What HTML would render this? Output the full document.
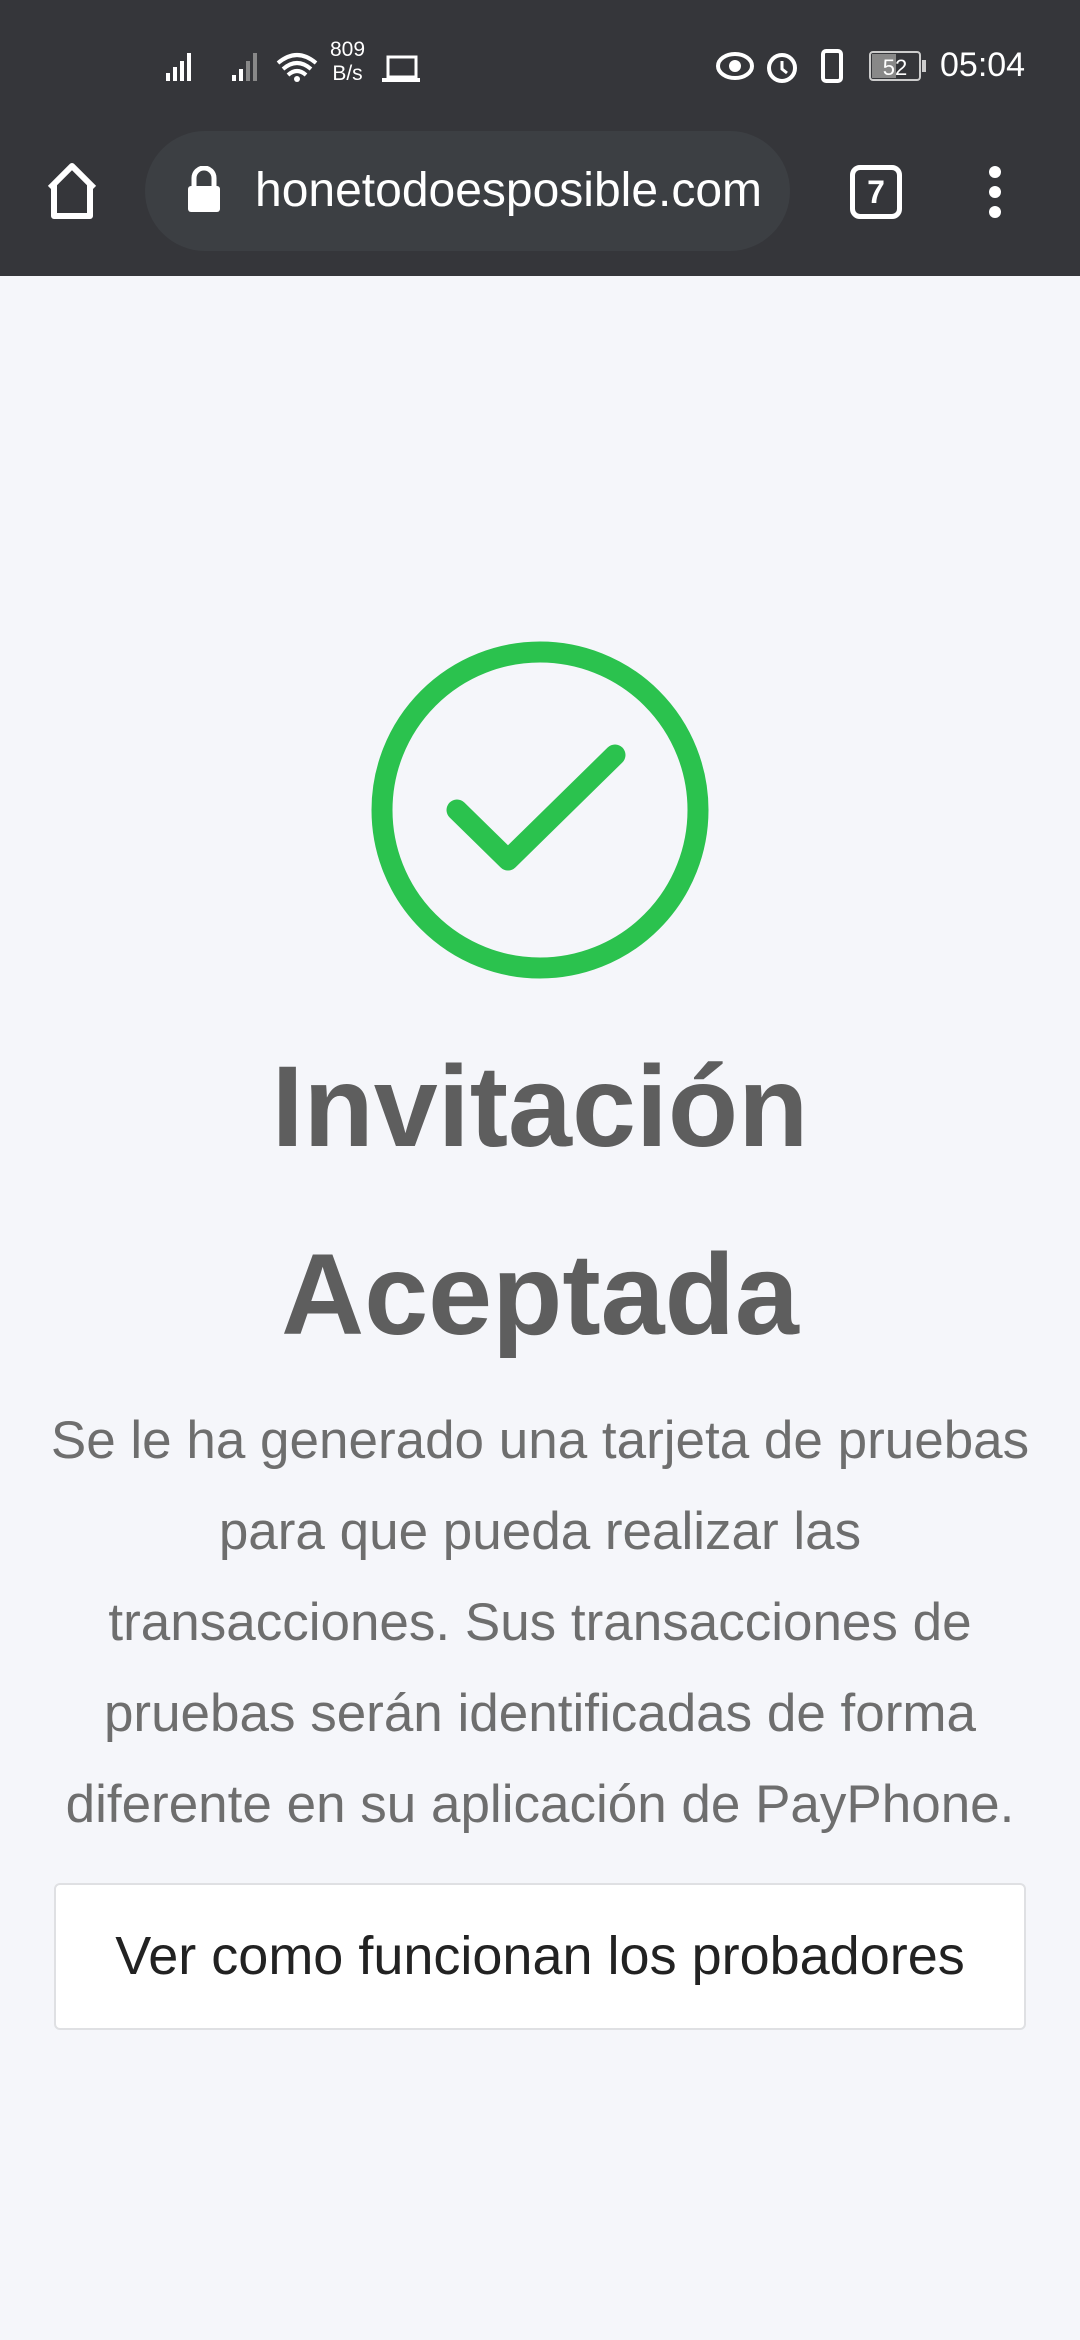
<!DOCTYPE html>
<html><head><meta charset="utf-8"><style>
*{margin:0;padding:0;box-sizing:border-box}
body{width:1080px;height:2340px;background:#f5f6fa;font-family:"Liberation Sans",sans-serif;position:relative;overflow:hidden}
.top{position:absolute;left:0;top:0;width:1080px;height:276px;background:#35363a}
.st{position:absolute;color:#fff;font-size:34px}
.pill{position:absolute;left:145px;top:131px;width:645px;height:120px;border-radius:60px;background:#3c3f43}
.url{position:absolute;left:255px;top:163px;color:#fff;font-size:48px}
h1{position:absolute;left:0;width:1080px;text-align:center;color:#5e5e5e;font-size:115px;font-weight:bold;line-height:188px}
p{position:absolute;left:0;width:1080px;top:1395px;text-align:center;color:#6e6e6e;font-size:53px;line-height:91px;white-space:nowrap}
.btn{position:absolute;left:54px;top:1883px;width:972px;height:147px;background:#fff;border:2px solid #dfe0e3;border-radius:6px;text-align:center;line-height:143px;font-size:54px;color:#222}
</style></head><body>
<div class="top">
 <svg style="position:absolute;left:160px;top:45px" width="260" height="50" viewBox="0 0 260 50">
  <g fill="#fff"><rect x="6" y="28" width="4" height="8"/><rect x="13" y="22" width="4" height="14"/><rect x="20" y="16" width="4" height="20"/><rect x="27" y="8" width="4" height="28"/></g>
  <g fill="#fff"><rect x="72" y="30" width="4" height="6"/><rect x="79" y="24" width="4" height="12"/></g><g fill="#888"><rect x="86" y="16" width="4" height="20"/><rect x="93" y="8" width="4" height="28"/></g>
  <path d="M118 18 Q137 2 156 18 M123 24 Q137 12 151 24 M128 30 Q137 22 146 30" stroke="#fff" stroke-width="4" fill="none"/><circle cx="137" cy="34" r="3" fill="#fff"/>
  <rect x="228" y="12" width="28" height="20" fill="none" stroke="#fff" stroke-width="3"/><rect x="222" y="33" width="40" height="4" fill="#fff"/>
 </svg>
 <div class="st" style="left:330px;top:38px;font-size:21px;line-height:24px;text-align:center">809<br>B/s</div>
 <svg style="position:absolute;left:715px;top:45px" width="220" height="42" viewBox="0 0 220 42">
  <ellipse cx="20" cy="21" rx="17" ry="12" fill="none" stroke="#fff" stroke-width="4"/><circle cx="20" cy="21" r="6" fill="#fff"/>
  <circle cx="67" cy="23" r="13" fill="none" stroke="#fff" stroke-width="4"/><path d="M67 16v8l5 4" stroke="#fff" stroke-width="3" fill="none"/>
  <rect x="108" y="6" width="18" height="30" rx="3" fill="none" stroke="#fff" stroke-width="4"/>
  <rect x="155" y="7" width="50" height="28" rx="3" fill="none" stroke="#ccc" stroke-width="2"/><rect x="157" y="9" width="24" height="24" fill="#888"/><rect x="207" y="15" width="4" height="12" fill="#ccc"/>
  <text x="180" y="30" fill="#fff" font-size="22" text-anchor="middle" font-family="Liberation Sans">52</text>
 </svg>
 <div class="st" style="left:940px;top:46px">05:04</div>
 <svg style="position:absolute;left:44px;top:162px" width="56" height="60" viewBox="0 0 56 60"><path d="M6 26 L28 4 L50 26 M10 22 V54 H46 V22" stroke="#fff" stroke-width="6" fill="none" stroke-linejoin="round"/></svg>
 <div class="pill"></div>
 <svg style="position:absolute;left:186px;top:166px" width="36" height="48" viewBox="0 0 36 48"><path d="M8 20 V12 a10 10 0 0 1 20 0 V20" stroke="#fff" stroke-width="5" fill="none"/><rect x="2" y="20" width="32" height="26" rx="3" fill="#fff"/></svg>
 <div class="url">honetodoesposible.com</div>
 <div style="position:absolute;left:850px;top:165px;width:52px;height:54px;border:5px solid #fff;border-radius:10px;color:#fff;font-size:32px;font-weight:bold;text-align:center;line-height:44px">7</div>
 <svg style="position:absolute;left:985px;top:164px" width="20" height="56"><circle cx="10" cy="8" r="6" fill="#fff"/><circle cx="10" cy="28" r="6" fill="#fff"/><circle cx="10" cy="48" r="6" fill="#fff"/></svg>
</div>
<svg style="position:absolute;left:370px;top:640px" width="340" height="340" viewBox="370 640 340 340">
 <circle cx="540" cy="810" r="158" fill="none" stroke="#2bc24e" stroke-width="21"/>
 <path d="M457 810 L508 860 L615 755" fill="none" stroke="#2bc24e" stroke-width="21" stroke-linecap="round" stroke-linejoin="round"/>
</svg>
<h1 style="top:1013px">Invitación</h1>
<h1 style="top:1201px">Aceptada</h1>
<p>Se le ha generado una tarjeta de pruebas<br>para que pueda realizar las<br>transacciones. Sus transacciones de<br>pruebas serán identificadas de forma<br>diferente en su aplicación de PayPhone.</p>
<div class="btn">Ver como funcionan los probadores</div>
</body></html>
